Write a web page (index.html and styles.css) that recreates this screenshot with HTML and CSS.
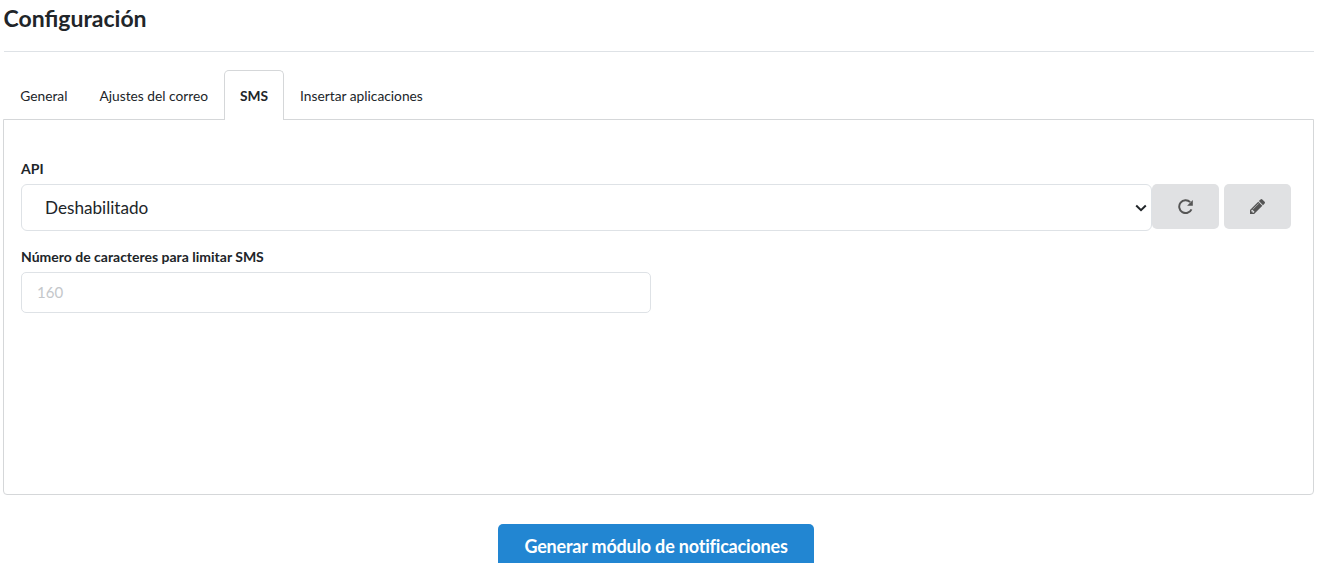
FILE: index.html
```html
<!DOCTYPE html>
<html lang="es">
<head>
<meta charset="utf-8">
<title>Configuración</title>
<link rel="stylesheet" href="styles.css">
</head>
<body>
<main class="page">
  <h1 class="title">Configuración</h1>
  <hr class="rule">
  <nav class="tabs">
    <a class="tab">General</a>
    <a class="tab">Ajustes del correo</a>
    <a class="tab active">SMS</a>
    <a class="tab">Insertar aplicaciones</a>
  </nav>
  <section class="panel">
    <label class="label">API</label>
    <div class="api-row">
      <div class="select-wrap">
        <select class="select">
          <option>Deshabilitado</option>
        </select>
        <svg class="chevron" viewBox="0 0 12 8" aria-hidden="true"><path d="M1.2 1.5 6 6.2l4.8-4.7" fill="none" stroke="#212529" stroke-width="2"/></svg>
      </div>
      <button class="icon-btn" type="button" aria-label="Recargar">
        <svg class="icon" viewBox="0 0 14 14"><path class="ring" d="M11.4 2.9A6 6 0 1 0 12.6 9.6"/><path d="M13.8 .9V6.2H8.5z"/></svg>
      </button>
      <button class="icon-btn" type="button" aria-label="Editar">
        <svg class="icon" viewBox="0 149 1515 1515"><path d="M363 1536l91-91-235-235-91 91v107h128v128h107zm523-928q0-22-22-22-10 0-17 7l-542 542q-7 7-7 17 0 22 22 22 10 0 17-7l542-542q7-7 7-17zm-54-192l416 416-832 832h-416v-416zm683 96q0 53-37 90l-166 166-416-416 166-165q36-38 90-38 53 0 91 38l235 234q37 39 37 91z"/></svg>
      </button>
    </div>
    <label class="label label-second">Número de caracteres para limitar SMS</label>
    <input class="input" type="text" placeholder="160">
  </section>
  <div class="actions">
    <button class="primary" type="button">Generar módulo de notificaciones</button>
  </div>
</main>
</body>
</html>
```
FILE: styles.css
```css
* { box-sizing: border-box; }
html, body { margin: 0; height: 563px; overflow: hidden; background: #fff; }
body { font-family: Lato, "Liberation Sans", sans-serif; color: #212529; }
.page { width: 1311px; margin-left: 3px; }
.title { margin: 0; padding: 5px 0 0 0.5px; height: 51px; font-size: 23px; line-height: 27px; font-weight: 700; color: #212529; }
.rule { margin: 0 0 18px 1px; border: 0; border-top: 1px solid #dee2e6; }
.tabs { display: flex; height: 50px; padding-left: 1.3px; position: relative; z-index: 1; }
.tab { display: flex; align-items: center; padding: 0 15px 1px; font-size: 13.75px; border: 1px solid transparent; border-bottom: 0; color: #212529; }
.tab.active { font-weight: 700; background: #fff; border-color: #d5d7d9; border-radius: 5px 5px 0 0; }
.panel { margin-top: -1px; height: 376px; border: 1px solid #d5d7d9; border-radius: 0 0 4px 4px; padding: 41px 17px 0; }
.label { display: block; font-size: 14px; font-weight: 700; line-height: 16px; margin-bottom: 7px; color: #212529; }
.label-second { margin-top: 18px; margin-bottom: 7px; }
.api-row { display: flex; align-items: flex-start; }
.select-wrap { position: relative; flex: 0 0 1131px; }
.select { display: block; width: 100%; height: 47px; padding: 0 36px 0 23px; border: 1px solid #dee2e6; border-radius: 6px; background: #fff; appearance: none; font-family: inherit; font-size: 17.15px; color: #212529; }
.chevron { position: absolute; right: 5px; top: 20px; width: 12px; height: 8px; }
.icon-btn { display: flex; align-items: center; justify-content: center; width: 67px; height: 45px; padding: 0; border: 0; border-radius: 5px; background: #e0e1e3; }
.icon-btn + .icon-btn { margin-left: 5px; }
.icon { width: 15px; height: 15px; fill: #555; }
.ring { fill: none; stroke: #555; stroke-width: 1.8; }
.input { display: block; width: 630px; height: 41px; padding: 0 15px 2px; border: 1px solid #dee2e6; border-radius: 5px; font-family: inherit; font-size: 15px; color: #212529; }
.input::placeholder { color: #c4c7ca; opacity: 1; }
.actions { display: flex; justify-content: center; padding: 29px 5px 0 0; }
.primary { width: 316px; height: 45px; border: 0; border-radius: 5px 5px 0 0; background: #2286d2; color: #fff; font-family: inherit; font-size: 18px; font-weight: 700; letter-spacing: -0.2px; padding: 0 0 2px; }
```
